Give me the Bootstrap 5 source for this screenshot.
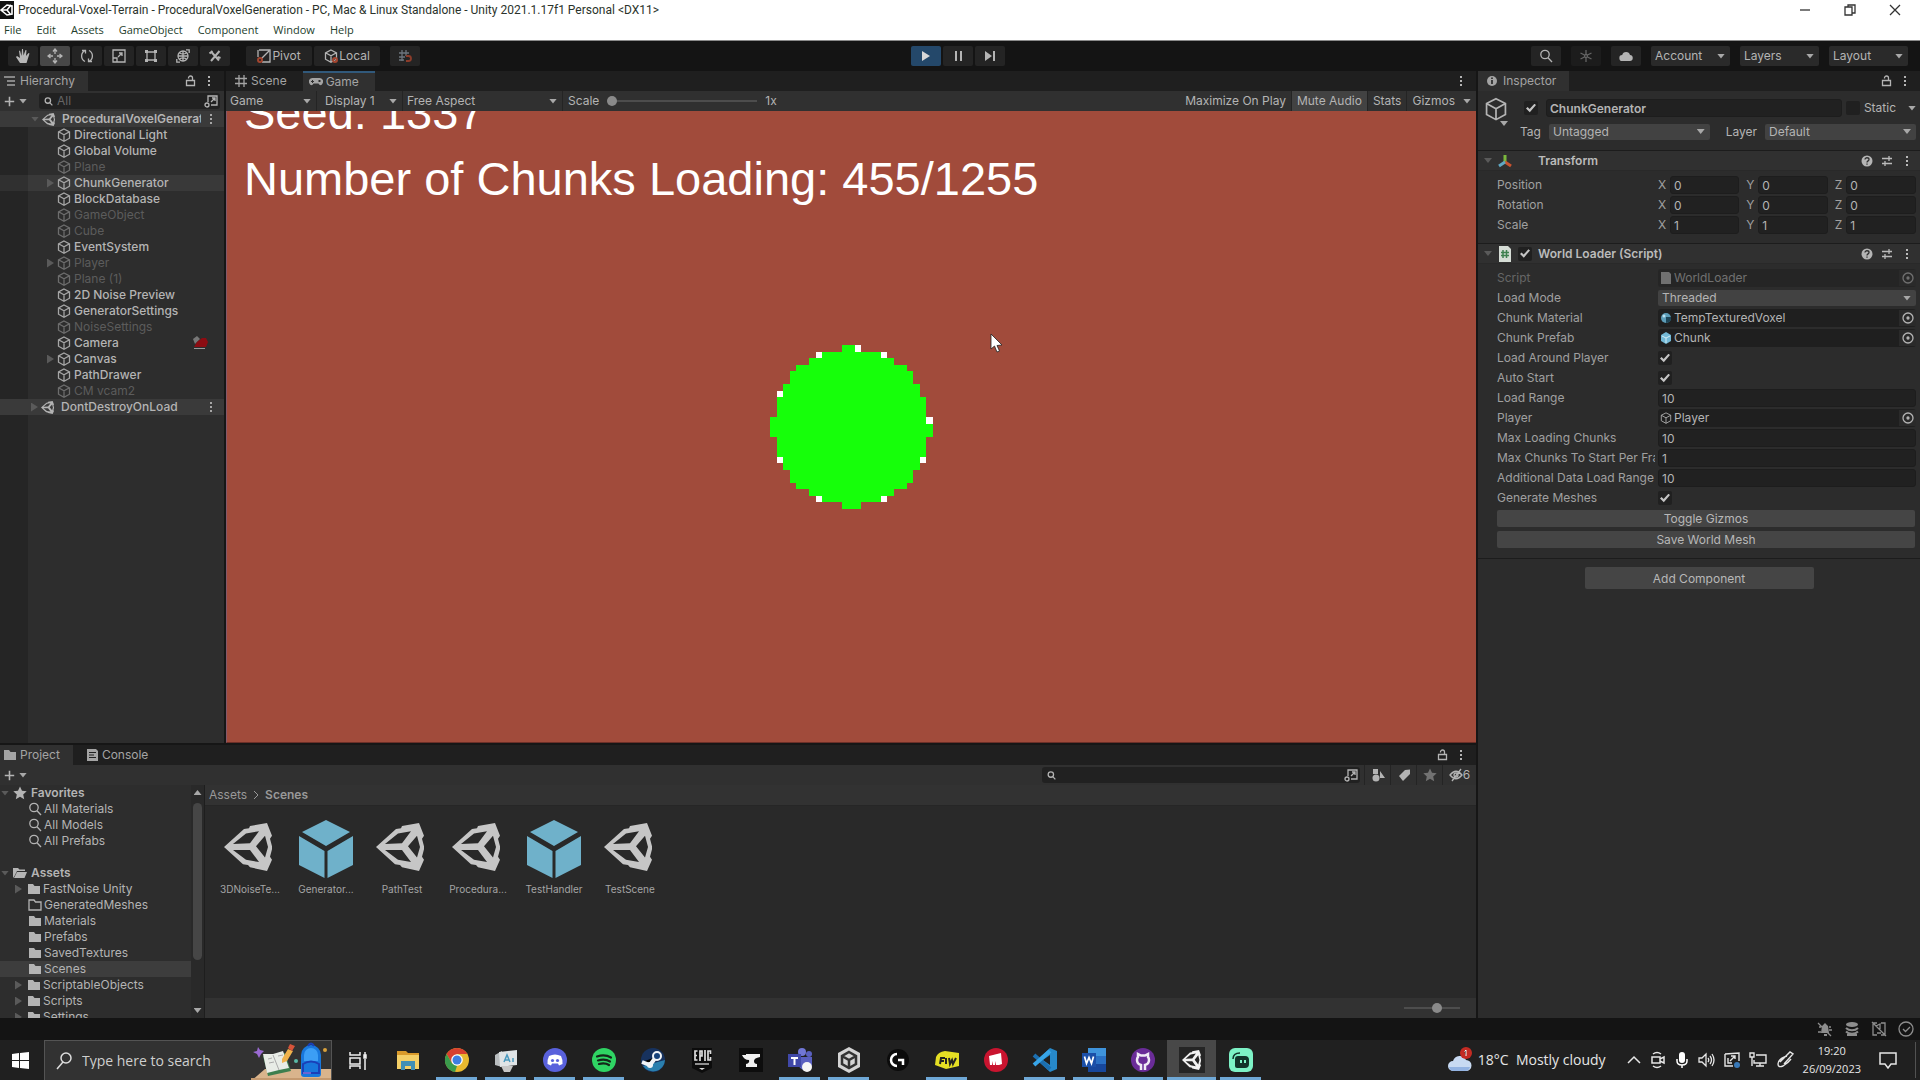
<!DOCTYPE html>
<html lang="en" data-bs-theme="dark">
<head>
<meta charset="utf-8">
<meta name="viewport" content="width=device-width, initial-scale=1">
<title>Procedural-Voxel-Terrain - Unity</title>
<link href="https://cdn.jsdelivr.net/npm/bootstrap@5.3.0/dist/css/bootstrap.min.css" rel="stylesheet">
<style>
:root{--txt:#b4b4b4;--dim:#5c5c5c;--panel:#2d2d2d;--bar:#303030;--strip:#1f1f1f;--edge:#161616;--field:#212121}
body{font-family:Inter,"Liberation Sans",sans-serif;font-size:12px;line-height:16px;color:var(--txt);background:#141414}
.app{height:100vh;min-height:800px;overflow:hidden}
svg{display:block;flex:none}
.ic{width:14px;height:14px;fill:none;stroke:currentColor;stroke-width:1.3}
.ic.mini{width:9px;height:9px;stroke-width:2}
.ic.add{width:11px;height:11px;stroke-width:2}
.ic.stat{width:16px;height:16px}
.solid{fill:currentColor;stroke:none}
button,input,select{font:inherit;color:inherit;background:none;border:0;padding:0;margin:0;min-width:0}
a{color:inherit;text-decoration:none}
ul{list-style:none;margin:0;padding:0}
.titlebar{background:#fff;color:#2b332b;font-family:Roboto,"Open Sans",sans-serif;font-size:12px;height:20px}
.menubar{background:#fff;color:#24402c;font-family:"Open Sans","Noto Sans",sans-serif;font-size:11px;height:21px;border-bottom:1px solid #8b8b8b;gap:15px;padding-left:4px}
.winctl{gap:31px;padding-right:18px;color:#333}
.tools{height:30px;padding:0 12px 0 8px}
.tgroup{display:flex;gap:2px}
.tbtn{height:20px;width:30px;background:#242424;border-radius:2px;display:flex;align-items:center;justify-content:center}
.tbtn.on{background:#474747}
.tbtn.play{background:#24486a;color:#d8d8d8}
.tbtn.wide{width:66px;gap:1px}
.tside{flex:1 1 0}
.tright{gap:10px}
.pick{position:relative;display:inline-flex;align-items:center}
.pick select{appearance:none;width:100%;height:100%;padding:0 16px 0 4px;text-overflow:clip}
.pick::after,.tri{content:"";width:8px;height:5px;background:#a8a8a8;clip-path:polygon(0 0,100% 0,50% 100%)}
.pick::after{position:absolute;right:5px;pointer-events:none}
.tri{display:inline-block;flex:none}
.tri.shut{width:7px;height:9px;clip-path:polygon(0 0,100% 50%,0 100%)}
.tri.faint{background:#5a5a5a}
.tri.up{clip-path:polygon(50% 0,100% 100%,0 100%)}
.toolpick{height:20px;width:79px;background:#2a2a2a;border-radius:2px}
.work{flex:1 1 0;min-height:0}
.center-col{flex:1 1 0;min-width:0}
.upper{flex:0 0 672px;min-height:0}
.hier{flex:0 0 226px;min-width:0;border-right:2px solid var(--edge);background:var(--panel)}
.tabbar{height:20px;background:var(--strip);flex:none}
.utab{height:20px;display:flex;align-items:center;gap:3px;padding:0 13px 0 3px;color:#a4a4a4}
.utab.on{background:var(--bar)}
.utab.focus{border-top:2px solid #31597b;padding-right:16px;padding-left:6px}
.subbar{height:20px;background:var(--bar);flex:none}
.hierbody{flex:1;background:linear-gradient(90deg,#252525 28px,transparent 28px)}
.hrow{height:16px;display:flex;align-items:center;gap:3px;padding-left:57px;font-weight:500;white-space:nowrap}
.hrow .ic{color:#a6a6a6}
.hrow.off{color:var(--dim);font-weight:400}
.hrow.off .ic{color:#6d6d6d}
.hrow.kid{padding-left:47px}
.hrow.scene{background:#3a3a3a;padding:0 6px 0 31px}
.hrow.scene span{flex:1 1 0;min-width:0;overflow:hidden}
.hrow.sel{background:linear-gradient(90deg,#303030 28px,#393939 28px)}
.searchbox{background:var(--field);border-radius:3px;height:16px;min-width:0;display:flex;align-items:center;padding:0 2px 0 5px;gap:4px}
.searchbox input{flex:1;outline:0}
.searchbox.wide{width:318px}
.searchbox input::placeholder{color:#666;opacity:1}
.gamebar>*{height:20px;border-right:1px solid #242424}
.gamebar .plain{padding:0 5px;display:flex;align-items:center;white-space:nowrap}
.gamebar .mute{background:#424242}
.view{flex:1;background:#a14b3b;overflow:hidden;position:relative;border-left:1px solid #84586a;border-bottom:1px solid #6b2f28}
.hud{position:absolute;left:17px;top:-31px;font:47px/66px "Liberation Sans",sans-serif;color:#fff;white-space:nowrap}
.cursor{position:absolute;left:763px;top:222px}
.rng{appearance:none;height:12px}
.rng.long{width:150px}
.rng.short{width:56px}
.rng::-webkit-slider-runnable-track{height:2px;background:#4d4d4d}
.rng::-webkit-slider-thumb{appearance:none;width:10px;height:10px;border-radius:50%;background:#8a8a8a;margin-top:-4px}
.lower{flex:1 1 0;min-height:0;border-top:2px solid var(--edge)}
.tree{flex:0 0 191px;overflow:hidden;background:var(--panel)}
.trow{height:16px;display:flex;align-items:center;gap:2px;padding-left:28px;white-space:nowrap}
.trow.kid{padding-left:15px;gap:5px}
.trow.kid .ic{margin-right:-3px}
.trow.top{padding-left:1px;gap:4px;font-weight:600}
.trow.sel{background:#3d3d3d}
.sbar{flex:0 0 14px;border-right:1px solid #1e1e1e;background:#292929;padding:5px 0}
.thumb{width:9px;background:#464646;border-radius:5px;flex:0 0 157px}
.crumbs{height:21px;background:#323232;border-bottom:1px solid #262626;padding-left:4px;gap:6px;color:#999}
.files{flex:1;background:#292929;padding:14px 7px;display:flex;align-items:flex-start}
.asset{width:76px;display:flex;flex-direction:column;align-items:center;gap:4px;font-size:10px;line-height:14px;color:#a5a5a5}
.asset .scn{width:48px;height:48px;margin:3px 4px 7px 0;color:#c6c6c6}
.pfoot{height:20px;background:#323232;flex:none}
.ptool{width:26px;height:20px;border-left:1px solid #242424;display:flex;align-items:center;justify-content:center}
.ptool.vis{width:34px}
.insp{flex:0 0 444px;border-left:2px solid var(--edge);background:#2c2c2c}
.objhead{padding:6px 0 6px 6px}
.objrow{height:22px;display:flex;align-items:center}
.objrow.tags{height:25px;gap:8px}
.ic.big{width:24px;height:24px;stroke-width:1}
.fld{height:18px;background:var(--field);border-radius:3px;padding:0 3px;width:100%;border:1px solid #1d1d1d}
.tick{appearance:none;width:14px;height:14px;background:#202020;border-radius:2px;flex:none;display:grid;place-items:center}
.tick:checked::before{content:"";width:10px;height:9px;background:#c4c4c4;clip-path:polygon(0 55%,16% 40%,36% 62%,84% 4%,100% 18%,38% 96%)}
.drop{height:16px;background:#424242;border-radius:2px}
.comphead{height:21px;background:var(--bar);border-top:1px solid #1c1c1c;border-bottom:1px solid #292929;font-weight:600;color:#bbb;padding:0 6px;gap:6px}
.prop{height:20px;display:flex;align-items:center;padding:0 4px 0 19px;gap:3px}
.prop>label,.prop>.lab{width:158px;flex:none;overflow:hidden;white-space:nowrap;color:#a0a0a0}
.axis{display:flex;align-items:center;gap:4px;flex:1 1 0}
.axis label{width:8px;color:#a0a0a0}
.obj{flex:1;height:18px;background:#1f1f1f;border-radius:3px;display:flex;align-items:center;gap:2px;padding-left:2px}
.obj input{flex:1;outline:0}
.obj button{background:#2a2a2a;width:17px;height:16px;display:flex;align-items:center;justify-content:center}
.ubtn{background:#454545;border-radius:2px;height:17px;display:block;width:100%;color:#b8b8b8;line-height:17px}
.ubtn.addc{width:229px;height:22px}
.acts{display:grid;gap:4px;padding:2px 5px 0 19px}
.addrow{margin-top:10px;padding-top:8px;border-top:1px solid #1c1c1c}
.statusbar{height:22px;padding-right:6px;gap:11px;color:#8d8d8d;flex:none}
.taskbar{height:40px;background:#202020;font-family:"Open Sans","Noto Sans",sans-serif;color:#e6e6e6;flex:none}
.startbtn{width:44px;height:40px;padding-right:4px}
.winsearch{width:288px;height:40px;background:#323232;border:1px solid #545454;border-bottom:0;padding-left:10px;gap:9px;overflow:hidden}
.winsearch input{font-size:14px;width:150px;outline:0}
.winsearch input::placeholder{color:#cfcfcf;opacity:1}
.app-btn{width:49px;height:40px;display:flex;align-items:center;justify-content:center;border-bottom:3px solid transparent;padding-top:3px;position:relative}
.app-btn.tview{width:51px}
.app-btn.run::after{content:"";position:absolute;left:4px;right:4px;bottom:-3px;height:3px;background:#6fa8d6}
.app-btn.cur{background:#484848}
.app-btn.cur::after{left:0;right:0}
.app-btn svg{width:26px;height:26px}
.weather{font-size:14px}
.clock{font-size:11px;line-height:18px;text-align:center}
.notif{margin:0 13px}
</style>
<script src="https://cdn.jsdelivr.net/npm/bootstrap@5.3.0/dist/js/bootstrap.bundle.min.js"></script>
</head>
<body>
<svg width="0" height="0" class="position-absolute" aria-hidden="true">
<symbol id="cube" viewBox="0 0 14 14"><path d="M7 1l5.500 2.800v6.400L7 13.200 1.500 10.200V3.800zM1.500 3.800L7 6.800l5.500-3M7 6.800v6.400"/></symbol>
<symbol id="unity" viewBox="0 0 48 64" preserveAspectRatio="none"><path fill="currentColor" fill-rule="evenodd" d="M0 32L20 8l5-1 1-3L43 0l5 17-2 4 2 10v4l-2 10 2 4-5 15-17-5-2-3-5-1zM9 28l17-1 9-16-13 3zM32 31l9 15 3-14-3-15zM9 36l13 13 13 3-9-16z"/></symbol>
<symbol id="folder" viewBox="0 0 14 14"><path d="M1 2h5l1.500 2H13v8H1z"/></symbol>
<symbol id="lens" viewBox="0 0 14 14"><circle cx="6" cy="5.500" r="4.200"/><path d="M9 8.700l4 4.300"/></symbol>
<symbol id="lock" viewBox="0 0 14 14"><path d="M2.500 6.500h8v5h-8zM4.500 4.500V4a2 2 0 0 1 4 0v2.500"/></symbol>
<symbol id="dots" viewBox="0 0 14 14"><path d="M6 2h2v2H6zM6 6h2v2H6zM6 10h2v2H6z"/></symbol>
<symbol id="plus" viewBox="0 0 14 14"><path d="M7 1v12M1 7h12"/></symbol>
<symbol id="pop" viewBox="0 0 14 14"><path d="M4 8V2h9v9H7M7 8l4-4M8 4h3v3"/><circle cx="3" cy="11" r="2"/></symbol>
<symbol id="target" viewBox="0 0 14 14"><circle cx="7" cy="7" r="5"/><circle cx="7" cy="7" r="1" fill="currentColor"/></symbol>
<symbol id="help" viewBox="0 0 14 14"><circle cx="7" cy="7" r="5.500" fill="#b5b5b5" stroke="none"/><path stroke="#303030" d="M5 5.500c0-2.400 4-2.300 4 0 0 1.500-2 1.200-2 3M7 9.500v1.300"/></symbol>
<symbol id="preset" viewBox="0 0 14 14"><path d="M2 4.500h10M2 9.500h10M9 2v5M5 7v5"/></symbol>
<symbol id="star" viewBox="0 0 14 14"><path d="M7 .5l2 4.300 4.700.5-3.500 3.200 1 4.700L7 10.800l-4.200 2.400 1-4.700L.3 5.300 5 4.800z"/></symbol>
<symbol id="bigcube" viewBox="0 0 54 58"><path fill="#6fb1ca" d="M27 0l24 12-24 14L3 12zM0 16l25.500 15v27L0 45zM54 16L28.500 31v27L54 45z"/></symbol>
</svg>

<div class="app d-flex flex-column">
<header class="flex-shrink-0">
<div class="titlebar d-flex align-items-center justify-content-between">
<div class="d-flex align-items-center gap-1"><svg width="14" height="18" viewBox="0 0 14 18"><path fill="#111" d="M0 0h14v18H0z"/><path fill="none" stroke="#fff" stroke-width="1.600" d="M1 9l6-5 5 1v8l-5 1zM2 9h5l4-5M7 9l4 5"/></svg><span>Procedural-Voxel-Terrain - ProceduralVoxelGeneration - PC, Mac &amp; Linux Standalone - Unity 2021.1.17f1 Personal &lt;DX11&gt;</span></div>
<div class="winctl d-flex"><button aria-label="Minimize"><svg class="ic" viewBox="0 0 14 14"><path d="M2 7h10"/></svg></button><button aria-label="Restore"><svg class="ic" viewBox="0 0 14 14"><path d="M2 4h7v8H2zM5 4V2h7v8H9"/></svg></button><button aria-label="Close"><svg class="ic" viewBox="0 0 14 14"><path d="M2 2l10 10M12 2L2 12"/></svg></button></div>
</div>
<nav class="menubar d-flex align-items-center"><a href="#">File</a><a href="#">Edit</a><a href="#">Assets</a><a href="#">GameObject</a><a href="#">Component</a><a href="#">Window</a><a href="#">Help</a></nav>
<div class="tools d-flex align-items-center">
<div class="tside d-flex align-items-center">
<div class="tgroup">
<button class="tbtn" aria-label="Hand"><svg width="16" height="16" viewBox="0 0 16 16"><path fill="#b8b8b8" d="M5 15L1 9l1-1 3 2-1-7 1-.5L6.500 8 7 1h1l.5 6.500L10.500 2l1 .3L11 8l2.500-3 1 .6-3 9.400z"/></svg></button>
<button class="tbtn on" aria-label="Move"><svg class="ic stat" viewBox="0 0 16 16"><path d="M8 2v4M8 10v4M2 8h4M10 8h4M6 3.500L8 1l2 2.500M6 12.500L8 15l2-2.500M3.500 6L1 8l2.500 2M12.500 6L15 8l-2.500 2"/></svg></button>
<button class="tbtn" aria-label="Rotate"><svg class="ic" viewBox="0 0 14 14"><path d="M5 12.500A6 6 0 0 1 5 1.700M9 1.500A6 6 0 0 1 9 12.300M2 1.500h3.500v3M12 12.500H8.500v-3"/></svg></button>
<button class="tbtn" aria-label="Scale"><svg class="ic" viewBox="0 0 14 14"><path d="M1 1h12v12H1zM1 9h4v4M6 8l4-4M7 4h3v3"/></svg></button>
<button class="tbtn" aria-label="Rect"><svg class="ic" viewBox="0 0 14 14"><path d="M3 3h8v8H3z"/><path class="solid" d="M1 1h3v3H1zM10 1h3v3h-3zM1 10h3v3H1zM10 10h3v3h-3z"/></svg></button>
<button class="tbtn" aria-label="Transform"><svg class="ic" viewBox="0 0 14 14"><circle cx="7" cy="7" r="5"/><path d="M7 2v10M2 7h10M3.500 4c2.500 1.500 4.500 1.500 7 0M3.500 10c2.500-1.500 4.500-1.500 7 0M10 .8h3.200V4M.8 10v3.200H4"/></svg></button>
<button class="tbtn" aria-label="Custom tools"><svg class="ic" viewBox="0 0 14 14"><path stroke-width="2" d="M3 2.500l8 9M11.500 2L3 12M1.500 4.500l3-2.500M9.500 8l3 1"/></svg></button>
</div>
<div class="tgroup ms-3">
<button class="tbtn wide"><svg class="ic" viewBox="0 0 14 14"><path d="M2 1h11v12H5M1 8V1M4 10l8-8"/><circle cx="3" cy="11" r="2" stroke="#a3452f" stroke-width="2"/></svg>Pivot</button>
<button class="tbtn wide"><svg class="ic"><use href="#cube"/><circle cx="11" cy="11" r="2" stroke="#a3452f" stroke-width="2"/></svg>Local</button>
<button class="tbtn ms-2" aria-label="Snap"><svg class="ic text-secondary" viewBox="0 0 14 14"><path d="M1 4h10M1 8h6M4 1v11M8 1v6M1 11h5"/><path stroke="#8c3c2a" stroke-width="1.800" d="M8 7h2.500a2 2 0 0 1 0 5H8"/></svg></button>
</div>
</div>
<div class="tgroup">
<button class="tbtn play" aria-label="Play"><svg width="12" height="12"><path fill="currentColor" d="M2 1l8 5-8 5z"/></svg></button>
<button class="tbtn" aria-label="Pause"><svg width="12" height="12"><path fill="currentColor" d="M3 1h2v10H3zM8 1h2v10H8z"/></svg></button>
<button class="tbtn" aria-label="Step"><svg width="12" height="12"><path fill="currentColor" d="M1 1l7 5-7 5zM9 1h2v10H9z"/></svg></button>
</div>
<div class="tside tright d-flex align-items-center justify-content-end">
<button class="tbtn" aria-label="Search"><svg class="ic"><use href="#lens"/></svg></button>
<button class="tbtn opacity-50" aria-label="Collab"><svg class="ic" viewBox="0 0 14 14"><path d="M7 1v4M7 9v4M1.500 4l4 2M8.500 8l4 2M12.500 4l-4 2M5.500 8l-4 2"/><circle cx="7" cy="7" r="1.500"/></svg></button>
<button class="tbtn" aria-label="Cloud"><svg class="ic solid" viewBox="0 0 14 14"><path d="M3.500 12a3 3 0 0 1-.3-6A4 4 0 0 1 11 6a3 3 0 0 1-.5 6z"/></svg></button>
<span class="pick toolpick"><select aria-label="Account"><option>Account</option></select></span>
<span class="pick toolpick"><select aria-label="Layers"><option>Layers</option></select></span>
<span class="pick toolpick"><select aria-label="Layout"><option>Layout</option></select></span>
</div>
</div>
</header>

<main class="work d-flex">
<div class="center-col d-flex flex-column">
<div class="upper d-flex">
<section class="hier d-flex flex-column">
<div class="tabbar d-flex justify-content-between align-items-center pe-2"><span class="utab on"><svg class="ic" viewBox="0 0 14 14"><path d="M1 3h11M4 7h8M4 11h8"/></svg>Hierarchy</span><span class="d-flex gap-1"><svg class="ic"><use href="#lock"/></svg><svg class="ic solid"><use href="#dots"/></svg></span></div>
<div class="subbar d-flex align-items-center px-1 gap-1"><button class="d-flex align-items-center gap-1 me-2" aria-label="Add"><svg class="ic add"><use href="#plus"/></svg><i class="tri"></i></button><div class="searchbox flex-fill"><svg class="ic mini"><use href="#lens"/></svg><input type="search" placeholder="All" aria-label="Search hierarchy" size="8"><svg class="ic"><use href="#pop"/></svg></div></div>
<ul class="hierbody">
<li class="hrow scene fw-semibold"><i class="tri faint"></i><svg width="13" height="13"><use href="#unity"/></svg><span class="ms-1">ProceduralVoxelGeneration</span><svg class="ic solid"><use href="#dots"/></svg></li>
<li class="hrow"><svg class="ic"><use href="#cube"/></svg>Directional Light</li>
<li class="hrow"><svg class="ic"><use href="#cube"/></svg>Global Volume</li>
<li class="hrow off"><svg class="ic"><use href="#cube"/></svg>Plane</li>
<li class="hrow kid sel"><i class="tri shut faint"></i><svg class="ic"><use href="#cube"/></svg>ChunkGenerator</li>
<li class="hrow"><svg class="ic"><use href="#cube"/></svg>BlockDatabase</li>
<li class="hrow off"><svg class="ic"><use href="#cube"/></svg>GameObject</li>
<li class="hrow off"><svg class="ic"><use href="#cube"/></svg>Cube</li>
<li class="hrow"><svg class="ic"><use href="#cube"/></svg>EventSystem</li>
<li class="hrow kid off"><i class="tri shut faint"></i><svg class="ic"><use href="#cube"/></svg>Player</li>
<li class="hrow off"><svg class="ic"><use href="#cube"/></svg>Plane (1)</li>
<li class="hrow"><svg class="ic"><use href="#cube"/></svg>2D Noise Preview</li>
<li class="hrow"><svg class="ic"><use href="#cube"/></svg>GeneratorSettings</li>
<li class="hrow off"><svg class="ic"><use href="#cube"/></svg>NoiseSettings</li>
<li class="hrow"><svg class="ic"><use href="#cube"/></svg>Camera<svg width="16" height="14" class="ms-auto me-3"><path fill="#777" d="M1 3l4-3 3 3-5 5z"/><path fill="#8c0c12" d="M2 11l3-5 5-4h4l2 4-2 5z"/><path stroke="#999" d="M2 12.500h11"/></svg></li>
<li class="hrow kid"><i class="tri shut faint"></i><svg class="ic"><use href="#cube"/></svg>Canvas</li>
<li class="hrow"><svg class="ic"><use href="#cube"/></svg>PathDrawer</li>
<li class="hrow off"><svg class="ic"><use href="#cube"/></svg>CM vcam2</li>
<li class="hrow scene"><i class="tri shut faint"></i><svg width="13" height="13"><use href="#unity"/></svg><span class="ms-1">DontDestroyOnLoad</span><svg class="ic solid"><use href="#dots"/></svg></li>
</ul>
</section>
<section class="center-col d-flex flex-column">
<div class="tabbar d-flex align-items-center"><span class="utab ps-2 pe-3"><svg class="ic"><path d="M5 1v12M10 1v12M1 4.500h12M1 9.500h12"/></svg>Scene</span><span class="utab on focus"><svg class="ic solid"><path fill-rule="evenodd" d="M3.500 3h7a3.500 3.500 0 0 1 3 5.500c-1 2.500-3 2-4 0h-5c-1 2-3 2.500-4 0A3.500 3.500 0 0 1 3.500 3zM3 5v1H2v1h1v1h1V7h1V6H4V5zM9.500 5v2h2V5z"/></svg>Game</span><svg class="ic solid ms-auto me-2"><use href="#dots"/></svg></div>
<div class="subbar gamebar d-flex align-items-center">
<span class="pick" style="width:91px"><select aria-label="View"><option>Game</option></select></span>
<span class="pick ps-1" style="width:86px"><select aria-label="Display"><option>Display 1</option></select></span>
<span class="pick" style="width:160px"><select aria-label="Aspect"><option>Free Aspect</option></select></span>
<div class="plain border-0 flex-fill gap-2"><label for="scale">Scale</label><input class="rng long" id="scale" type="range" value="0"><span>1x</span></div>
<button class="plain">Maximize On Play</button><button class="plain mute">Mute Audio</button><button class="plain">Stats</button><button class="plain gap-2 border-0">Gizmos<i class="tri"></i></button>
</div>
<div class="view d-flex align-items-center justify-content-center">
<svg width="163" height="164" viewBox="0 0 25 25" preserveAspectRatio="none" shape-rendering="crispEdges"><path fill="#16ff0a" d="M11 0h3v1h4v1h1v1h2v1h1v2h1v2h1v3h1v3h-1v4h-1v1h-1v2h-1v1h-2v1h-1v1h-4v1h-3v-1H7v-1H6v-1H4v-1H3v-2H2v-1H1v-4H0v-3h1V7h1V6h1V4h1V3h2V2h1V1h4z"/><path fill="#fff" d="M13 0h1v1h-1zM7 1h1v1H7zM17 1h1v1h-1zM1 7h1v1H1zM24 11h1v1h-1zM1 17h1v1H1zM23 17h1v1h-1zM7 23h1v1H7zM17 23h1v1h-1z"/></svg>
<div class="hud">Seed: 1337<br>Number of Chunks Loading: 455/1255</div>
<svg class="cursor" width="14" height="20"><path fill="#fff" stroke="#222" stroke-width=".8" d="M1 1v15l3.500-3 2.500 6 2.500-1-2.500-5.500 5-.5z"/></svg>
</div>
</section>
</div>

<section class="lower d-flex flex-column">
<div class="tabbar d-flex align-items-center"><span class="utab on"><svg class="ic solid"><use href="#folder"/></svg>Project</span><span class="utab ps-2"><svg class="ic solid ms-1"><path fill-rule="evenodd" d="M2 1h9l2 2v10H2zM4 4v1h7V4zM4 6.500v1h5v-1zM4 9v1h7V9z"/></svg>Console</span><span class="d-flex gap-1 ms-auto me-2"><svg class="ic"><use href="#lock"/></svg><svg class="ic solid"><use href="#dots"/></svg></span></div>
<div class="subbar d-flex align-items-center ps-1"><button class="d-flex align-items-center gap-1" aria-label="Create"><svg class="ic add"><use href="#plus"/></svg><i class="tri"></i></button>
<div class="searchbox wide ms-auto me-1"><svg class="ic mini"><use href="#lens"/></svg><input type="search" aria-label="Search project"><svg class="ic"><use href="#pop"/></svg></div>
<button class="ptool" aria-label="Filter by type"><svg class="ic solid"><path d="M2 1h5v5H2zM9 3l5 7H9z"/><circle cx="5" cy="10" r="3.500"/></svg></button><button class="ptool" aria-label="Filter by label"><svg class="ic solid"><path d="M2 8l6-6 5-.5V6l-7 7z"/></svg></button><button class="ptool" aria-label="Favorite"><svg class="ic solid opacity-50"><use href="#star"/></svg></button><button class="ptool vis" aria-label="Hidden packages"><svg class="ic"><path d="M1 7c4-5 8-5 12 0-4 5-8 5-12 0zM3 13L12 1"/><circle cx="7" cy="7" r="2"/></svg>6</button></div>
<div class="work d-flex">
<ul class="tree">
<li class="trow top"><i class="tri faint"></i><svg class="ic solid"><use href="#star"/></svg>Favorites</li>
<li class="trow"><svg class="ic"><use href="#lens"/></svg>All Materials</li>
<li class="trow"><svg class="ic"><use href="#lens"/></svg>All Models</li>
<li class="trow"><svg class="ic"><use href="#lens"/></svg>All Prefabs</li>
<li class="trow"></li>
<li class="trow top"><i class="tri faint"></i><svg class="ic solid"><path d="M0 2h5l1.500 1.500H12V5H4L1.500 10 0 12zM4 6h10l-2.500 6H1z"/></svg>Assets</li>
<li class="trow kid"><i class="tri shut faint"></i><svg class="ic solid"><use href="#folder"/></svg>FastNoise Unity</li>
<li class="trow"><svg class="ic"><use href="#folder"/></svg>GeneratedMeshes</li>
<li class="trow"><svg class="ic solid"><use href="#folder"/></svg>Materials</li>
<li class="trow"><svg class="ic solid"><use href="#folder"/></svg>Prefabs</li>
<li class="trow"><svg class="ic solid"><use href="#folder"/></svg>SavedTextures</li>
<li class="trow sel"><svg class="ic solid"><use href="#folder"/></svg>Scenes</li>
<li class="trow kid"><i class="tri shut faint"></i><svg class="ic solid"><use href="#folder"/></svg>ScriptableObjects</li>
<li class="trow kid"><i class="tri shut faint"></i><svg class="ic solid"><use href="#folder"/></svg>Scripts</li>
<li class="trow kid"><i class="tri shut faint"></i><svg class="ic solid"><use href="#folder"/></svg>Settings</li>
</ul>
<div class="sbar d-flex flex-column align-items-center"><i class="tri up mb-2"></i><div class="thumb"></div><i class="tri mt-auto"></i></div>
<div class="center-col d-flex flex-column">
<div class="crumbs d-flex align-items-center"><a href="#">Assets</a><svg width="6" height="10" fill="none" stroke="currentColor"><path d="M1 1l4 4-4 4"/></svg><a href="#" class="fw-semibold">Scenes</a></div>
<div class="files">
<div class="asset"><svg class="scn"><use href="#unity"/></svg>3DNoiseTe...</div>
<div class="asset"><svg width="54" height="58"><use href="#bigcube"/></svg>Generator...</div>
<div class="asset"><svg class="scn"><use href="#unity"/></svg>PathTest</div>
<div class="asset"><svg class="scn"><use href="#unity"/></svg>Procedura...</div>
<div class="asset"><svg width="54" height="58"><use href="#bigcube"/></svg>TestHandler</div>
<div class="asset"><svg class="scn"><use href="#unity"/></svg>TestScene</div>
</div>
<div class="pfoot d-flex align-items-center justify-content-end pe-3"><input class="rng short" type="range" value="60" aria-label="Icon size"></div>
</div>
</div>
</section>
</div>

<aside class="insp d-flex flex-column">
<div class="tabbar d-flex align-items-center justify-content-between pe-2"><span class="utab on ps-2"><svg class="ic" viewBox="0 0 14 14"><circle cx="6" cy="7" r="5" class="solid"/><path stroke="#222" stroke-width="1.600" d="M6 6v4M6 3.500V5"/></svg>Inspector</span><span class="d-flex gap-1"><svg class="ic"><use href="#lock"/></svg><svg class="ic solid"><use href="#dots"/></svg></span></div>
<div class="objhead d-flex">
<div><svg class="ic big"><use href="#cube"/></svg><i class="tri d-block ms-auto"></i></div>
<div class="flex-fill ps-2">
<div class="objrow pe-1 ps-2"><input class="tick" type="checkbox" checked aria-label="Active"><input class="fld fw-semibold ms-2 me-1" aria-label="Name" value="ChunkGenerator"><input class="tick me-1" type="checkbox" id="static"><label for="static" class="me-2 pe-1">Static</label><i class="tri"></i></div>
<div class="objrow tags ps-1 pe-1"><label for="tag">Tag</label><span class="pick drop" style="flex:164 1 0"><select id="tag"><option>Untagged</option></select></span><label for="layer" class="ms-2">Layer</label><span class="pick drop" style="flex:154 1 0"><select id="layer"><option>Default</option></select></span></div>
</div>
</div>
<div class="comphead d-flex align-items-center"><i class="tri faint"></i><svg width="14" height="14"><path stroke="#7bb83d" stroke-width="3" d="M7 8V1"/><path stroke="#c9532f" stroke-width="3" d="M7 8l6 4"/><path stroke="#5fa8c4" stroke-width="3" d="M7 8l-6 4"/></svg><span class="ms-3 ps-1 flex-fill">Transform</span><svg class="ic"><use href="#help"/></svg><svg class="ic"><use href="#preset"/></svg><svg class="ic solid"><use href="#dots"/></svg></div>
<div class="py-1 mb-1">
<div class="prop"><span class="lab">Position</span><div class="axis"><label for="px">X</label><input class="fld" id="px" value="0"></div><div class="axis ms-1"><label for="py">Y</label><input class="fld" id="py" value="0"></div><div class="axis ms-1"><label for="pz">Z</label><input class="fld" id="pz" value="0"></div></div>
<div class="prop"><span class="lab">Rotation</span><div class="axis"><label for="rx">X</label><input class="fld" id="rx" value="0"></div><div class="axis ms-1"><label for="ry">Y</label><input class="fld" id="ry" value="0"></div><div class="axis ms-1"><label for="rz">Z</label><input class="fld" id="rz" value="0"></div></div>
<div class="prop"><span class="lab">Scale</span><div class="axis"><label for="sx">X</label><input class="fld" id="sx" value="1"></div><div class="axis ms-1"><label for="sy">Y</label><input class="fld" id="sy" value="1"></div><div class="axis ms-1"><label for="sz">Z</label><input class="fld" id="sz" value="1"></div></div>
</div>
<div class="comphead d-flex align-items-center"><i class="tri faint"></i><svg width="14" height="16"><path fill="#d5dcd5" d="M1 0h9l3 3v13H1z"/><path stroke="#3f8050" stroke-width="1.500" d="M5 4v8M8.500 4v8M3 6.500h8M3 9.500h8"/></svg><input class="tick" type="checkbox" checked aria-label="World Loader enabled"><span class="flex-fill">World Loader (Script)</span><svg class="ic"><use href="#help"/></svg><svg class="ic"><use href="#preset"/></svg><svg class="ic solid"><use href="#dots"/></svg></div>
<div class="pt-1">
<div class="prop opacity-50"><label for="scr">Script</label><div class="obj"><svg width="12" height="14" fill="currentColor"><path d="M1 1h8l2 2v10H1z"/></svg><input id="scr" value="WorldLoader" readonly><button aria-label="Pick script"><svg class="ic"><use href="#target"/></svg></button></div></div>
<div class="prop"><label for="mode">Load Mode</label><span class="pick drop flex-fill"><select id="mode"><option>Threaded</option></select></span></div>
<div class="prop"><label for="mat">Chunk Material</label><div class="obj"><svg width="12" height="12"><circle cx="6" cy="6" r="5" fill="#5d9db8"/><path fill="#1d4557" d="M6 5l5 0a5 5 0 0 1-5 6z"/><circle cx="4" cy="4" r="1.500" fill="#b9dfee"/></svg><input id="mat" value="TempTexturedVoxel"><button aria-label="Pick material"><svg class="ic"><use href="#target"/></svg></button></div></div>
<div class="prop"><label for="pre">Chunk Prefab</label><div class="obj"><svg width="12" height="12"><path fill="#74b9d6" d="M6 0l5 3v6l-5 3-5-3V3z"/><path fill="none" stroke="#d3edf7" d="M2 4l4 2 4-2M6 6v5"/></svg><input id="pre" value="Chunk"><button aria-label="Pick prefab"><svg class="ic"><use href="#target"/></svg></button></div></div>
<div class="prop"><label for="lap">Load Around Player</label><input class="tick" id="lap" type="checkbox" checked></div>
<div class="prop"><label for="aus">Auto Start</label><input class="tick" id="aus" type="checkbox" checked></div>
<div class="prop"><label for="lr">Load Range</label><input class="fld" id="lr" value="10"></div>
<div class="prop"><label for="pl">Player</label><div class="obj"><svg width="12" height="12" fill="none" stroke="currentColor"><use href="#cube"/></svg><input id="pl" value="Player"><button aria-label="Pick player"><svg class="ic"><use href="#target"/></svg></button></div></div>
<div class="prop"><label for="mlc">Max Loading Chunks</label><input class="fld" id="mlc" value="10"></div>
<div class="prop"><label for="mcs">Max Chunks To Start Per Frame</label><input class="fld" id="mcs" value="1"></div>
<div class="prop"><label for="adl">Additional Data Load Range</label><input class="fld" id="adl" value="10"></div>
<div class="prop"><label for="gm">Generate Meshes</label><input class="tick" id="gm" type="checkbox" checked></div>
<div class="acts"><button class="ubtn">Toggle Gizmos</button><button class="ubtn">Save World Mesh</button></div>
</div>
<div class="addrow d-flex justify-content-center"><button class="ubtn addc">Add Component</button></div>
</aside>
</main>

<footer>
<div class="statusbar d-flex align-items-center justify-content-end">
<svg class="ic stat"><path class="solid" d="M4 12l1-7 3-3 3 3 1 7zM7 13h3v2H7z"/><path d="M1 2l13 13M2 6h2M12 6h2M1 11h3M12 9h3"/></svg>
<svg class="ic stat"><ellipse class="solid" cx="8" cy="3.500" rx="6" ry="2.500"/><path stroke-width="2" d="M2 7c3 3 9 3 12 0M2 10.500c3 3 9 3 12 0M3 14h10"/></svg>
<svg class="ic stat"><path d="M6 2H2v12h4M10 2h4v12h-4M1 1l14 14M5 5l4-2v5M6 12h4"/></svg>
<svg class="ic stat"><circle cx="8" cy="8" r="7"/><path d="M5 8l2.500 2.500L12 6"/></svg>
</div>
<div class="taskbar d-flex align-items-center">
<button class="startbtn d-flex align-items-center justify-content-center" aria-label="Start"><svg width="17" height="17"><path fill="#fff" d="M0 2l7-1v7H0zM8 1l9-1v8H8zM0 9h7v7l-7-1zM8 9h9v8l-9-1z"/></svg></button>
<div class="winsearch d-flex align-items-center"><svg width="18" height="20" fill="none" stroke="#ddd" stroke-width="1.500"><circle cx="11" cy="7" r="5"/><path d="M8 11l-6 7"/></svg><input type="text" placeholder="Type here to search" aria-label="Type here to search">
<svg class="ms-auto" width="80" height="40"><path fill="#d9b48c" d="M0 40l14-12h66v12z"/><path fill="#c49a70" d="M0 37h80v3H0z"/><path fill="#9b6bd3" d="M7 6l2 3 4 1-3 3-2 4-2-4-4-2 4-1z"/><path fill="#3d7f4e" d="M12 15l22-3 6 18-23 5z"/><path fill="#e8ece6" d="M12 13l10 0 10-3 6 17-10 2-12 3z"/><path stroke="#aaa" d="M22 14l6 15M17 18l4-1M27 15l5-1M18 22l5-1"/><path fill="#f0b24c" d="M31 18L37 8l5 2-6 10-5 2z"/><path fill="#d8543a" d="M37 7l2-4 5 2-3 5z"/><path fill="#1877dc" d="M50 33V14a10 10 0 0 1 20 0v19q0 3-3 3H53q-3 0-3-3z"/><path fill="#3c9ef5" d="M53 20v-6a7 7 0 0 1 14 0v6z"/><path fill="none" stroke="#1a3fb8" stroke-width="2" d="M52 23q8-5 16 0v9H52zM57 5q3-5 6 0"/><path stroke="#bf8bea" d="M52 32h8"/><circle cx="74" cy="9" r="2" fill="#d9a13b"/><circle cx="45" cy="20" r="2" fill="#59b9a7"/></svg></div>
<div class="d-flex">
<button class="app-btn tview" aria-label="Task view"><svg viewBox="0 0 26 26" fill="none" stroke="#eee" stroke-width="1.500"><path d="M5 5v3h10V5M5 11h10v6H5zM5 22v-3h10v3M20 5v3M20 12v11"/><path fill="#eee" d="M19 8h2v3h-2z"/></svg></button>
<button class="app-btn" aria-label="File Explorer"><svg viewBox="0 0 26 26"><path fill="#d99a2b" d="M2 4h9l2 2h11v4H2z"/><path fill="#f4cf67" d="M2 8h22v14H2z"/><path fill="#418fb5" d="M6 14h14v9h-4v-4h-6v4H6z"/></svg></button>
<button class="app-btn run" aria-label="Chrome"><svg viewBox="0 0 26 26"><circle cx="13" cy="13" r="12" fill="#e8b92f"/><path fill="#d8402f" d="M2.600 7a12 12 0 0 1 20.800 0H13l-5.200 9z"/><path fill="#3a9b4c" d="M2.600 7l5.200 9 5.200 3-2 6A12 12 0 0 1 2.600 7z"/><circle cx="13" cy="13" r="5.800" fill="#fff"/><circle cx="13" cy="13" r="4.500" fill="#3f7ee0"/></svg></button>
<button class="app-btn run" aria-label="Font viewer"><svg viewBox="0 0 26 26"><path fill="#b9bdbf" d="M2 8l7-4v16l-7-2z"/><path fill="#e0e4e6" d="M6 5l18-2v15l-17 2z"/><path stroke="#4b9abf" stroke-width="1.500" fill="none" d="M11 15l3-7 3 7M12 13h4M20 15v-4"/><path fill="#c7c7c7" d="M8 19l12 0-3 6h-6z"/></svg></button>
<button class="app-btn run" aria-label="Discord"><svg viewBox="0 0 26 26"><circle cx="13" cy="13" r="12" fill="#5961dc"/><path fill="#fff" d="M7 9q6-3 12 0 2 4 1.500 8l-3.500 1.500-1-2h-6l-1 2L5.500 17Q5 13 7 9z"/><circle cx="10.500" cy="13.500" r="1.600" fill="#5961dc"/><circle cx="15.500" cy="13.500" r="1.600" fill="#5961dc"/></svg></button>
<button class="app-btn run" aria-label="Spotify"><svg viewBox="0 0 26 26"><circle cx="13" cy="13" r="12" fill="#2fd463"/><path fill="none" stroke="#14261a" stroke-width="2.200" stroke-linecap="round" d="M6 9.500q8-2.500 14 1M7 13.500q7-2 12 1M8 17q6-1.500 10 1"/></svg></button>
<button class="app-btn" aria-label="Steam"><svg viewBox="0 0 26 26"><circle cx="13" cy="13" r="12" fill="#17325e"/><path fill="#2a7fae" d="M3 19a12 12 0 0 0 22-6z"/><path stroke="#f1f4f7" stroke-width="4" d="M2 15l8 3 6-8"/><circle cx="17" cy="9" r="4" fill="#17427a" stroke="#f1f4f7" stroke-width="2"/><circle cx="10" cy="18" r="3" fill="#f1f4f7"/></svg></button>
<button class="app-btn" aria-label="Epic Games"><svg viewBox="0 0 26 26"><path fill="#0c0c0c" d="M3 1h20v20l-10 5-10-5z"/><path fill="none" stroke="#ddd" stroke-width="1.700" d="M8.500 4H6v9h2.500M6 8.500h2M11 14V4h2v5h-2M16 3v11M21.500 7V4H19v9h2.500v-3"/><path stroke="#bbb" stroke-width="1.500" d="M6 17h14"/><path fill="#ddd" d="M10 21h6l-3 2z"/></svg></button>
<button class="app-btn" aria-label="Anvil"><svg viewBox="0 0 26 26"><path fill="#0d0d0d" d="M1 1h24v24H1z"/><path fill="#f0f0f0" d="M4 8h4V7h14v3q-6 1-6 4 0 3 3 3v3H8v-3q4-1 3-4-5 0-7-5z"/></svg></button>
<button class="app-btn run" aria-label="Teams"><svg viewBox="0 0 26 26"><circle cx="15" cy="5" r="4" fill="#7177d5"/><circle cx="22" cy="7" r="3" fill="#5a60c0"/><path fill="#5a60c0" d="M11 10h14v8q-2 5-7 5t-7-6z"/><path fill="#4048a8" d="M1 7h13v13H1z"/><path stroke="#fff" stroke-width="2" d="M4 11h7M7.500 11v7"/><circle cx="20" cy="20" r="5" fill="#f5f5f5"/></svg></button>
<button class="app-btn run" aria-label="Unity Hub"><svg viewBox="0 0 26 26"><path fill="#d4d4d4" d="M13 0l11 6v14l-11 6-11-6V6z"/><path fill="none" stroke="#333" stroke-width="2.500" d="M13 5l7 4v8l-7 4-7-4V9zM6 9l7 4 7-4M13 13v8"/></svg></button>
<button class="app-btn" aria-label="Logitech G"><svg viewBox="0 0 26 26"><circle cx="13" cy="13" r="11" fill="#0b0b0b"/><path fill="none" stroke="#fff" stroke-width="2.500" d="M12 7a6 6 0 0 0 0 12M13 13h5v5"/></svg></button>
<button class="app-btn run" aria-label="FW"><svg viewBox="0 0 26 26"><path fill="#e5df24" d="M2 10q2-5 9-6l14 2v13l-13 3-11-4z"/><path fill="none" stroke="#222" stroke-width="2" d="M6 17l1-6h4M6 14h4M12 11v6M15 11l1 6 2-4 1 4 3-6"/></svg></button>
<button class="app-btn" aria-label="Riot"><svg viewBox="0 0 26 26"><circle cx="13" cy="13" r="12" fill="#c9142f"/><path fill="#fff" d="M6 9l12-3 1 11-3 1h-3l-.500-4-.500 4h-2l-1-4v4H7z"/></svg></button>
<button class="app-btn run" aria-label="VS Code"><svg viewBox="0 0 26 26"><path fill="#2789ca" d="M18 1l7 3v18l-7 3L5 13z"/><path fill="#202020" d="M18 8v10l-7-5z"/><path stroke="#1c6fb0" stroke-width="4" d="M2 8l16 14"/><path stroke="#38a5e8" stroke-width="4" d="M2 18L18 4"/></svg></button>
<button class="app-btn run" aria-label="Word"><svg viewBox="0 0 26 26"><path fill="#3f94dc" d="M7 1h18v8H7z"/><path fill="#2a70c4" d="M7 9h18v8H7z"/><path fill="#17479c" d="M7 17h18v8H7z"/><path fill="#1b4fa8" d="M1 6h14v14H1z"/><path fill="none" stroke="#fff" stroke-width="1.700" d="M3.500 9.500l2 7 2.500-6 2.500 6 2-7"/></svg></button>
<button class="app-btn run" aria-label="GitHub Desktop"><svg viewBox="0 0 26 26"><circle cx="13" cy="13" r="12" fill="#6a2c98"/><path fill="none" stroke="#f0eaf5" stroke-width="2.500" d="M11 23v-5q-4-1-4-5 0-2 1-3V7l3 1.500h4L18 7v3q1 1 1 3 0 4-4 5v5"/></svg></button>
<button class="app-btn run cur" aria-label="Unity"><svg viewBox="0 0 26 26" color="#f2f2f2"><path fill="#252525" d="M0 0h26v26H0z"/><use href="#unity" x="3" y="3" width="19" height="20"/></svg></button>
<button class="app-btn run" aria-label="Streamlabs"><svg viewBox="0 0 26 26"><rect x="1" y="1" width="24" height="24" rx="6" fill="#7df2c6"/><path fill="#12332a" d="M7 12q0-3 3-3h7q4 0 4 4v4q0 4-4 4h-8q-2 0-2-2z"/><path fill="none" stroke="#12332a" stroke-width="1.500" d="M5 12q0-6 7-6"/><path stroke="#7df2c6" stroke-width="2" d="M13 13v3M17 13v3"/></svg></button>
</div>
<div class="ms-auto d-flex align-items-center">
<button class="weather d-flex align-items-center gap-1" aria-label="Weather"><svg width="28" height="28"><path fill="#c8daf2" d="M7 25a5 5 0 0 1 0-10 7 7 0 0 1 13-1 5 5 0 0 1 0 11z"/><path fill="#93b3e2" d="M3 21h21q-1 4-5 4H7q-3 0-4-4z"/><circle cx="20" cy="7" r="6" fill="#c42b23"/><path stroke="#fff" d="M18.500 5.500L20 4v6"/></svg><span>18°C&nbsp; Mostly cloudy</span></button>
<div class="d-flex align-items-center gap-2 ms-3 ps-1 me-2">
<svg width="16" height="16" fill="none" stroke="#e6e6e6" stroke-width="1.500"><path d="M2 11l6-6 6 6"/></svg>
<svg width="16" height="18" fill="none" stroke="#e6e6e6" stroke-width="1.500"><path d="M3 3q4-3 8 0M3 15q4 3 8 0M2 6h8v6H2zM10 8l4-2v6l-4-2"/></svg>
<svg width="16" height="18"><rect x="5" y="1" width="6" height="11" rx="3" fill="#fff"/><path d="M3 8v2q0 4 5 4t5-4V8M8 14v3" fill="none" stroke="#fff" stroke-width="1.500"/></svg>
<svg width="17" height="16" fill="none" stroke="#e6e6e6" stroke-width="1.300"><path d="M1 6h3l4-4v12l-4-4H1zM10 6q1.500 2 0 4M12 4q3 4 0 8M14 2q4 6 0 12"/></svg>
<svg width="18" height="18" fill="none" stroke="#e6e6e6" stroke-width="1.400"><path d="M2 3l14-1v8M2 3v12h8M5 7v5h4M12 5L7 10M8 5h4v3"/><circle cx="14" cy="14" r="3" fill="#3979b8" stroke="none"/></svg>
<svg width="18" height="16" fill="none" stroke="#e6e6e6" stroke-width="1.400"><path d="M7 3h10v8H5V8M11 11v3M7 14h8M1 1h4v4H1zM3 5v9"/></svg>
<svg width="20" height="18" fill="none" stroke="#e6e6e6" stroke-width="1.400"><path d="M5 11L15 1l3 2-9 10M12 5q-9 3-9 8 0 4 5 2 5-3 8-7"/></svg>
</div>
<div class="clock">19:20<br>26/09/2023</div>
<button class="notif px-1" aria-label="Notifications"><svg width="20" height="18" fill="none" stroke="#e6e6e6" stroke-width="1.500"><path d="M2 2h16v11h-5l-3 4-3-4H2z"/></svg></button>
<div class="vr me-1"></div>
</div>
</div>
</footer>
</div>
</body>
</html>
